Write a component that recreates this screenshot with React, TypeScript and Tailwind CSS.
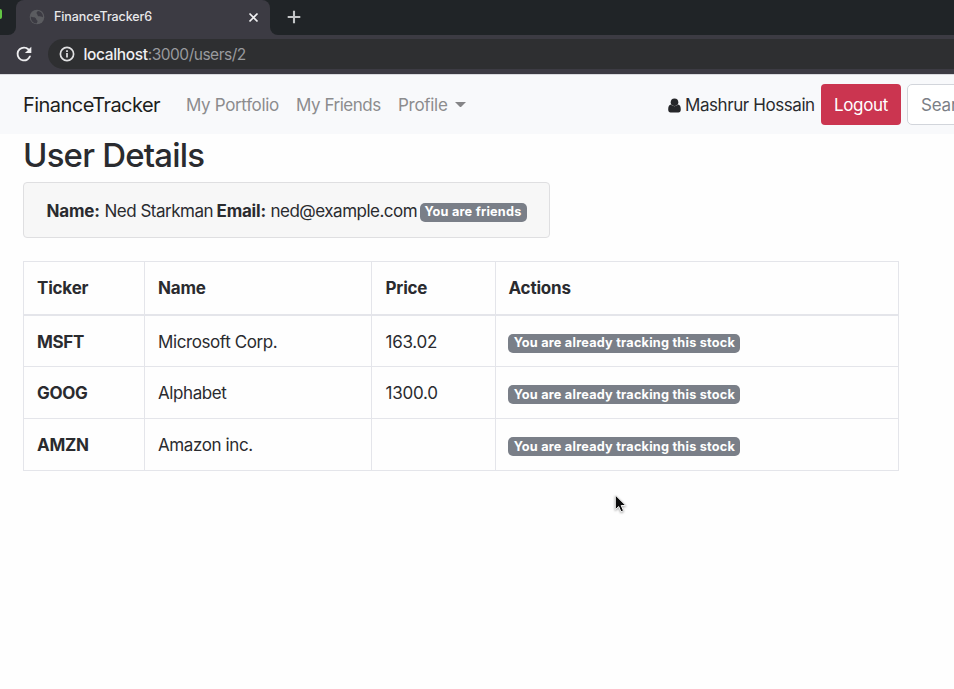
import React from "react";

const rows = [
  { ticker: "MSFT", name: "Microsoft Corp.", price: "163.02", height: "h-[51px]" },
  { ticker: "GOOG", name: "Alphabet", price: "1300.0", height: "h-[52px]" },
  { ticker: "AMZN", name: "Amazon inc.", price: "", height: "h-[52px]" },
];

function Badge({ children, className = "" }: { children: React.ReactNode; className?: string }) {
  return (
    <span className={`flex h-[19px] shrink-0 items-center justify-center rounded-[5px] bg-[#7a7f88] pt-px text-[12.7px] font-bold leading-none tracking-[0.23px] text-white ${className}`}>
      {children}
    </span>
  );
}

function BrowserChrome() {
  return (
    <header className="h-[74px] bg-[#3c3b43]">
      <div className="flex h-[35px] bg-[#3c3b43]">
        <div className="flex w-4 items-start rounded-br-[8px] bg-[#202427]">
          <div className="mt-[9px] h-[10px] w-[2px] rounded-r-full bg-[#62c544]" />
        </div>
        <div className="flex w-[254px] bg-[#202427]">
          <div className="flex h-[35px] w-full items-center rounded-t-[8px] bg-[#3c3b43] pl-[13px] pr-[11px]">
            <svg className="mt-[-1px] size-[16px]" viewBox="0 0 16 16">
              <circle cx="8" cy="8" r="7.3" fill="#5b5c60" />
              <path d="M1.800 7.500C3.200 8.700 5.200 7.600 6.500 9c1.200 1.200.5 2 1.800 2.500.6 1-.1 2-.8 2.900C4.300 14.400 1.500 11.500 1.800 7.500zM9 1.900C7.600 2.800 7 3.800 8 4.900c1 .9.200 1.900 1.600 2.400 1.500.5 2.900-.1 4.400.9C14.200 5 12.200 2.400 9 1.900z" fill="#3c3b43" />
            </svg>
            <span className="ml-[9px] grow whitespace-nowrap text-[12.5px] font-medium tracking-[-0.1px] text-[#e8e8ea]">FinanceTracker6</span>
            <svg className="size-[11px]" viewBox="0 0 11 11" stroke="#f1f1f3" strokeWidth="1.7">
              <path d="M1.500 1.500l8 8M9.500 1.500l-8 8" />
            </svg>
          </div>
        </div>
        <div className="flex grow rounded-bl-[8px] bg-[#202427] pl-[17px] pt-[10px]">
          <svg className="size-[14px]" viewBox="0 0 14 14" stroke="#c3c5c7" strokeWidth="2.1">
            <path d="M7 .7v12.600M.7 7h12.600" />
          </svg>
        </div>
      </div>
      <div className="flex h-[39px] items-start pt-[4px]">
        <svg className="ml-[13px] mt-[4px] size-[22px]" viewBox="0 0 24 24" fill="#eeeef0">
          <path d="M17.650 6.350A7.958 7.958 0 0 0 12 4a8 8 0 1 0 7.730 10h-2.080A5.990 5.990 0 0 1 12 18a6 6 0 1 1 0-12c1.660 0 3.140.69 4.220 1.780L13 11h7V4z" />
        </svg>
        <div className="ml-[13px] flex h-[30px] grow items-center rounded-l-full bg-[#2e2f31] pl-[11px]">
          <svg className="size-[16px]" viewBox="0 0 16 16" fill="none" stroke="#e1e1e3" strokeWidth="1.7">
            <circle cx="8" cy="8" r="6.600" />
            <path d="M8 7v4.500M8 4.200v1.700" />
          </svg>
          <span className="ml-[8.500px] whitespace-nowrap pt-[2px] text-[15.5px] tracking-[-0.48px] text-[#999a9e]">
            <span className="font-medium tracking-[-0.36px] text-[#f0f0f2]">localhost</span>:3000/users/2
          </span>
        </div>
      </div>
    </header>
  );
}

function Navbar() {
  return (
    <nav className="flex h-[60px] items-center whitespace-nowrap border-t border-[#d9dade] bg-[#f8f9fb] pl-[23px] text-[17px] text-[#8c8c8e]">
      <span className="w-[163px] shrink-0 text-[20px] tracking-[-0.55px] text-[#1d1e20]">FinanceTracker</span>
      <span className="w-[110px] shrink-0 pt-[2px] tracking-[-0.34px]">My Portfolio</span>
      <span className="w-[102px] shrink-0 pt-[2px] tracking-[-0.46px]">My Friends</span>
      <span className="w-[57px] shrink-0 pt-[2px] tracking-[-0.3px]">Profile</span>
      <span className="mt-[-1px] h-0 w-[11px] shrink-0 border-x-[5.500px] border-t-[5px] border-x-transparent border-t-[#858587]" />
      <svg className="ml-[202px] mt-[2px] h-[15px] w-[13px] shrink-0" viewBox="0 0 13 15" fill="#26272a">
        <circle cx="6.500" cy="4.200" r="3.800" />
        <path d="M3 6.600C1 6.900.2 8.500.2 11.600c0 2 .9 3 2.400 3h7.800c1.500 0 2.400-1 2.400-3 0-3.100-.8-4.700-2.800-5-2 2.200-5 2.200-7 0z" />
      </svg>
      <span className="ml-[4px] mt-[3px] w-[136px] shrink-0 tracking-[-0.42px] text-[#2a2b2e]">Mashrur Hossain</span>
      <button className="flex h-[41px] w-[80px] shrink-0 items-center justify-center rounded-[4px] bg-[#cb3550] pt-[2px] tracking-[-0.3px] text-white">Logout</button>
      <div className="ml-[6px] flex h-[41px] w-[200px] shrink-0 items-center rounded-[5px] border border-[#d2d5db] bg-white pl-[13px] pt-[2px] tracking-[-0.2px] text-[#7b7f86]">Search</div>
    </nav>
  );
}

function StockTable() {
  return (
    <div className="mt-[23px] w-[876px] border border-b-0 border-[#e4e5ea]">
      <div className="grid h-[54px] grid-cols-[120px_227px_124px_403px] items-stretch border-b-2 border-[#e4e5ea] font-bold tracking-[-0.2px]">
        <div className="flex items-center pl-[13px] pt-[2px]">Ticker</div>
        <div className="flex items-center border-l border-[#e4e5ea] pl-[13px] pt-[2px]">Name</div>
        <div className="flex items-center border-l border-[#e4e5ea] pl-[13.500px] pt-[2px]">Price</div>
        <div className="flex items-center border-l border-[#e4e5ea] pl-[12.500px] pt-[2px]">Actions</div>
      </div>
      {rows.map((row) => (
        <div key={row.ticker} className={`grid grid-cols-[120px_227px_124px_403px] items-stretch border-b border-[#e4e5ea] ${row.height}`}>
          <div className="flex items-center pl-[13px] pt-[3px] font-bold tracking-[-0.3px]">{row.ticker}</div>
          <div className="flex items-center border-l border-[#e4e5ea] pl-[13px] pt-[3px]">{row.name}</div>
          <div className="flex items-center border-l border-[#e4e5ea] pl-[13.500px] pt-[3px] tracking-[-0.25px]">{row.price}</div>
          <div className="flex items-center border-l border-[#e4e5ea] pl-[12.400px] pt-[4px]">
            <Badge className="w-[232px]">You are already tracking this stock</Badge>
          </div>
        </div>
      ))}
    </div>
  );
}

export default function App() {
  return (
    <div className="relative h-[689px] w-[954px] overflow-hidden bg-[#fefefe] font-['Inter',sans-serif] text-[17px] text-[#2a2b2f]">
      <BrowserChrome />
      <Navbar />
      <main className="whitespace-nowrap pl-[23px] tracking-[-0.4px]">
        <h1 className="flex h-[48px] items-center pb-[5px] text-[33px] font-medium tracking-[-0.8px]">User Details</h1>
        <div className="flex h-[56px] w-[527px] items-center rounded-[4px] border border-[#dfdfe1] bg-[#f7f7f7] pl-[22.500px] pt-[3px]">
          <span className="w-[58px] shrink-0 font-bold tracking-[-0.2px]">Name:</span>
          <span className="w-[112px] shrink-0 tracking-[-0.5px]">Ned Starkman</span>
          <span className="w-[54px] shrink-0 font-bold tracking-[-0.2px]">Email:</span>
          <span className="w-[149px] shrink-0 tracking-[-0.5px]">ned@example.com</span>
          <Badge className="mt-px w-[107px]">You are friends</Badge>
        </div>
        <StockTable />
      </main>
      <svg className="absolute left-[612px] top-[493px] h-[24px] w-[18px] drop-shadow-[0_1px_1px_rgba(0,0,0,0.35)]" viewBox="0 0 18 24">
        <path d="M3.300 2v14.700l3.400-3.200 2.300 5.300 2.500-1.100-2.300-5.200h4.600z" fill="#0c0c0d" stroke="#f4f4f4" strokeWidth="1" />
      </svg>
    </div>
  );
}
